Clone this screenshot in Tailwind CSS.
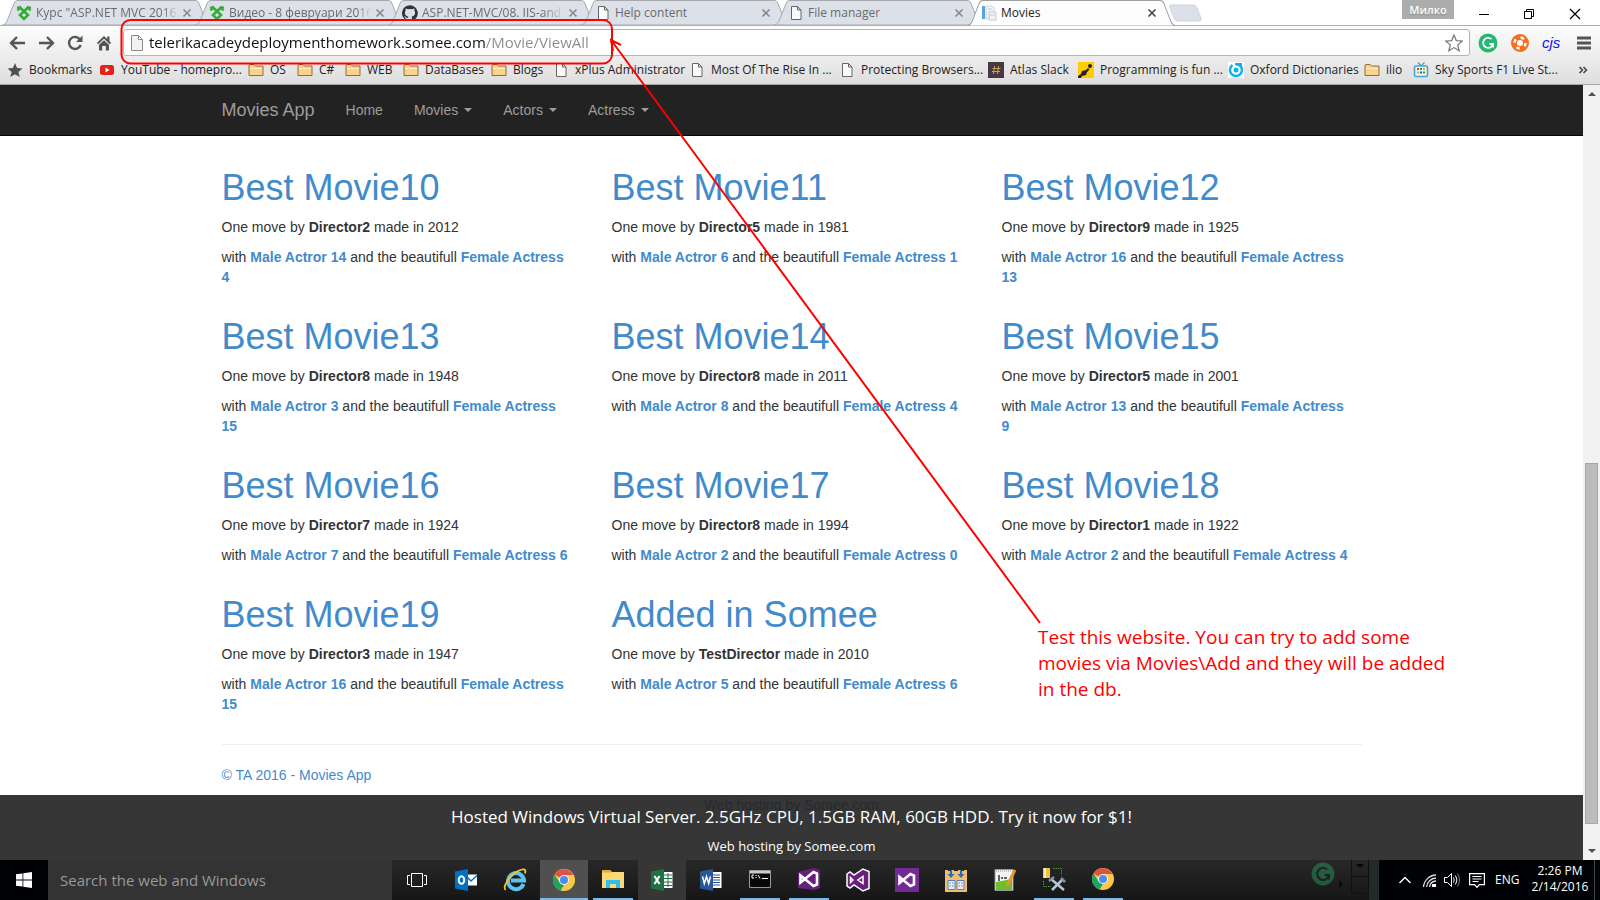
<!DOCTYPE html>
<html lang="en">
<head>
<meta charset="utf-8">
<title>Movies</title>
<script src="https://cdn.jsdelivr.net/npm/@tailwindcss/browser@4"></script>
</head>
<body class="relative flex min-h-screen flex-col bg-white font-['Open_Sans','Noto_Sans',sans-serif]">

<!-- Shared icon shapes -->
<svg class="hidden" aria-hidden="true">
  <symbol id="tab" viewBox="0 0 209 25" preserveAspectRatio="none">
    <path d="M0.500 25 C3 24.500 4 23 5 21 L12 3.500 C13 1 14 .5 16 .5 H193 C195 .5 196 1 197 3.500 L204 21 C205 23 206 24.500 208.500 25Z"/>
  </symbol>
  <symbol id="page" viewBox="0 0 16 16"><path d="M3.500 1.500h6l3.500 3.500v9.500h-9.500z M9.500 1.500v3.500h3.500" fill="#fafafa" stroke="#666"/></symbol>
  <symbol id="folder" viewBox="0 0 16 16"><path d="M1 13.500V4Q1 2.500 2 2.500h4l1.500 1.500H15v9.500z" fill="#fbd48a" stroke="#94683a"/><path d="M2 6h12v1H2z" fill="#ffebc0"/></symbol>
  <symbol id="telerik" viewBox="0 0 16 16"><path d="M1.500 5.500 4 2.500l8 7.500-4 4-4-4 8-7.500 2.500 3" fill="none" stroke="#36ab3c" stroke-width="2.600"/><path d="M1 2.500h3M12 2.500h3" stroke="#36ab3c" stroke-width="2"/></symbol>
  <symbol id="x" viewBox="0 0 10 10"><path d="M1.500 1.500l7 7M8.500 1.500l-7 7" stroke="currentColor" stroke-width="1.600"/></symbol>
  <symbol id="chrome" viewBox="0 0 24 24">
    <circle cx="12" cy="12" r="11" fill="#fbc943"/>
    <path d="M12 12 2.500 6.500A11 11 0 0 1 21.500 7H12z" fill="#de5145"/>
    <path d="M8 15l4 2-3.500 5.600A11 11 0 0 1 2.500 6.500z" fill="#1da362"/>
    <circle cx="12" cy="12" r="5" fill="#f4f4f4"/><circle cx="12" cy="12" r="4" fill="#4c8bf5"/>
  </symbol>
  <symbol id="grammarly" viewBox="0 0 20 20"><circle cx="10" cy="10" r="9.500" fill="#25b773"/><path d="M13.500 6.200A5 5 0 1 0 15 11h-3.500M15 11v3.500" fill="none" stroke="currentColor" stroke-width="1.800"/></symbol>
</svg>

<!-- Tab strip -->
<header class="flex h-[25px] items-stretch bg-white text-[12px] text-[#6b6b6b]">
  <nav class="flex pl-0.5" aria-label="Tabs">
    <a href="#" class="relative flex w-[209px] items-center pr-[19px] pl-3.5">
      <svg class="absolute inset-0 size-full" fill="#dce0e8" stroke="#a7a9ac"><use href="#tab"/></svg>
      <svg class="relative size-4"><use href="#telerik"/></svg>
      <span class="relative ml-1 flex-1 overflow-hidden whitespace-nowrap mask-r-from-90%">Курс "ASP.NET MVC 2016"</span>
      <svg class="relative ml-1 size-2.5 text-[#888]"><use href="#x"/></svg>
    </a>
    <a href="#" class="relative -ml-4 flex w-[209px] items-center pr-[19px] pl-3.5">
      <svg class="absolute inset-0 size-full" fill="#dce0e8" stroke="#a7a9ac"><use href="#tab"/></svg>
      <svg class="relative size-4"><use href="#telerik"/></svg>
      <span class="relative ml-1 flex-1 overflow-hidden whitespace-nowrap mask-r-from-90%">Видео - 8 февруари 2016</span>
      <svg class="relative ml-1 size-2.5 text-[#888]"><use href="#x"/></svg>
    </a>
    <a href="#" class="relative -ml-4 flex w-[209px] items-center pr-[19px] pl-3.5">
      <svg class="absolute inset-0 size-full" fill="#dce0e8" stroke="#a7a9ac"><use href="#tab"/></svg>
      <svg class="relative size-4" viewBox="0 0 16 16"><path fill="#333" d="M8 .2a8 8 0 0 0-2.500 15.600c.4.100.5-.2.500-.4v-1.500c-2.200.5-2.700-1-2.700-1-.4-.9-.9-1.200-.9-1.200-.7-.5.100-.5.100-.5.800.100 1.200.8 1.200.8.700 1.200 1.900.9 2.300.7.100-.5.300-.9.500-1.100-1.800-.2-3.600-.9-3.600-4 0-.9.300-1.600.8-2.100-.1-.2-.4-1 .1-2.100 0 0 .7-.2 2.200.8a7.500 7.500 0 0 1 4 0c1.500-1 2.200-.8 2.200-.8.400 1.100.2 1.900.1 2.100.5.600.8 1.300.8 2.100 0 3.100-1.900 3.800-3.700 4 .3.300.6.800.6 1.500v2.200c0 .2.100.5.600.4A8 8 0 0 0 8 .2z"/></svg>
      <span class="relative ml-1 flex-1 overflow-hidden whitespace-nowrap mask-r-from-85%">ASP.NET-MVC/08. IIS-and-</span>
      <svg class="relative ml-1 size-2.5 text-[#888]"><use href="#x"/></svg>
    </a>
    <a href="#" class="relative -ml-4 flex w-[209px] items-center pr-[19px] pl-3.5">
      <svg class="absolute inset-0 size-full" fill="#dce0e8" stroke="#a7a9ac"><use href="#tab"/></svg>
      <svg class="relative size-4"><use href="#page"/></svg>
      <span class="relative ml-1 flex-1 overflow-hidden whitespace-nowrap">Help content</span>
      <svg class="relative ml-1 size-2.5 text-[#888]"><use href="#x"/></svg>
    </a>
    <a href="#" class="relative -ml-4 flex w-[209px] items-center pr-[19px] pl-3.5">
      <svg class="absolute inset-0 size-full" fill="#dce0e8" stroke="#a7a9ac"><use href="#tab"/></svg>
      <svg class="relative size-4"><use href="#page"/></svg>
      <span class="relative ml-1 flex-1 overflow-hidden whitespace-nowrap">File manager</span>
      <svg class="relative ml-1 size-2.5 text-[#888]"><use href="#x"/></svg>
    </a>
    <a href="#" aria-current="page" class="relative z-10 -ml-4 -mb-px flex w-[209px] items-center pr-[19px] pb-px pl-3.5 text-[#222]">
      <svg class="absolute inset-0 size-full" fill="#fdfdfd" stroke="#a0a0a0"><use href="#tab"/></svg>
      <svg class="relative size-4" viewBox="0 0 16 16"><path d="M1 1h3v13H1z" fill="#5ba3d9"/><path d="M5 1h6l2 2v11H5z" fill="#f1f4f7" stroke="#ccd3da"/><path d="M7 4h4M8 7h7v8H8zM9 10h5" stroke="#c3cad2" fill="#f1f4f7"/></svg>
      <span class="relative ml-1 flex-1 overflow-hidden whitespace-nowrap">Movies</span>
      <svg class="relative ml-1 size-2.5 text-[#444]"><use href="#x"/></svg>
    </a>
    <button aria-label="New tab" class="-ml-2 h-[22px] w-9 pt-1"><svg class="h-full w-full" viewBox="0 0 36 18"><path d="M3 1h22q3 0 4 3l4 10q1 3-2 3H10q-3 0-4-3L2 4q-1-3 1-3z" fill="#dce0e8" stroke="#d0d3d8"/></svg></button>
  </nav>
  <div class="ml-auto flex items-start">
    <button class="mr-5 h-[19px] w-[52px] bg-[#acacac] text-[11px] leading-[18px] font-semibold text-white text-shadow-sm">Милко</button>
    <button aria-label="Minimize" class="h-6 w-5"><svg class="size-5" viewBox="0 0 20 20"><path d="M5 12.500h10" stroke="#000"/></svg></button>
    <button aria-label="Restore" class="ml-[25px] h-6 w-5"><svg class="size-5" viewBox="0 0 20 20" fill="none" stroke="#000"><path d="M5.500 9.500h7v7h-7zM7.500 9.500v-2h7v7h-2"/></svg></button>
    <button aria-label="Close" class="mr-[15px] ml-[26px] h-6 w-5"><svg class="size-5" viewBox="0 0 20 20"><path d="M5 7l10 10M15 7l-10 10" stroke="#000" stroke-width="1.200"/></svg></button>
  </div>
</header>

<!-- Toolbar and bookmarks -->
<div class="h-[60px] border-y border-t-[#b0b0b0] border-b-[#a6a6a6] bg-linear-to-b from-[#fdfdfd] to-[#dedede] text-[#222]">
  <div class="flex h-[33px] items-center">
    <button aria-label="Back" class="ml-2 w-[18px]"><svg class="h-4 w-[18px]" viewBox="0 0 18 16" fill="none" stroke="#555" stroke-width="2.400"><path d="M17 8H3M9 2L3 8l6 6"/></svg></button>
    <button aria-label="Forward" class="ml-3 w-[18px]"><svg class="h-4 w-[18px]" viewBox="0 0 18 16" fill="none" stroke="#555" stroke-width="2.400"><path d="M1 8h14M9 2l6 6-6 6"/></svg></button>
    <button aria-label="Reload" class="ml-[11px] w-4"><svg class="size-4" viewBox="0 0 16 16"><path d="M13 4.500A6 6 0 1 0 13.700 10" fill="none" stroke="#555" stroke-width="2.400"/><path d="M15.500 .5v6.500h-6.500z" fill="#555"/></svg></button>
    <button aria-label="Home" class="ml-[13px] w-4"><svg class="size-4" viewBox="0 0 16 16" fill="#555"><path d="M8 1 .8 8l1.400 1.200L8 3.800l5.800 5.400L15.200 8 13.500 6.300V1.500h-2.300v2.600z"/><path d="M3 9.800 8 5.200l5 4.600V15.500H9.800V11H6.200v4.500H3z"/></svg></button>
    <form class="ml-[11px] flex h-[27px] flex-1 items-center rounded-[3px] border border-[#b4b4b4] bg-white pr-1.5 pl-1.5">
      <svg class="size-4" viewBox="0 0 16 16"><path d="M1.500.500h7l4 4v11h-11z M8.500.500v4h4" fill="#f2f2f2" stroke="#8a8a8a"/></svg>
      <input aria-label="Address" value="telerikacadeydeploymenthomework.somee.com/Movie/ViewAll" class="ml-[3px] min-w-0 flex-1 bg-linear-to-r from-[#111] from-[337px] to-[#8b8b8b] to-[337px] bg-clip-text text-[15px] text-transparent outline-none">
      <button type="button" aria-label="Bookmark this page"><svg class="size-[18px]" viewBox="0 0 18 18"><path d="M9 1l2.300 5.600 6 .4-4.600 3.900 1.500 5.900L9 13.600l-5.200 3.200 1.500-5.900L.7 7l6-.4z" fill="#fff" stroke="#777" stroke-width="1.200"/></svg></button>
    </form>
    <button aria-label="Grammarly" class="ml-2 text-white"><svg class="size-5"><use href="#grammarly"/></svg></button>
    <button aria-label="Extension" class="ml-3"><svg class="size-5" viewBox="0 0 20 20"><circle cx="10" cy="10" r="9" fill="#f36f21"/><circle cx="10" cy="10" r="3" fill="#fff"/><circle cx="10" cy="10" r="5.500" fill="none" stroke="#fff" stroke-width="2.500" stroke-dasharray="3.500 5.140"/></svg></button>
    <button class="ml-3 w-6 text-left font-['Liberation_Sans',sans-serif] text-[15px] leading-5 text-[#1010ee] italic">cjs</button>
    <button aria-label="Menu" class="mr-[9px] ml-[11px]"><svg class="h-4 w-3.5" viewBox="0 0 14 16"><path d="M0 3h14M0 8h14M0 13h14" stroke="#555" stroke-width="3"/></svg></button>
  </div>
  <nav aria-label="Bookmarks" class="flex h-[22px] items-center pr-3 pl-[7px] text-[12px] whitespace-nowrap">
    <a href="#" class="flex w-[92px] shrink-0 items-center gap-1.5"><svg class="size-4" viewBox="0 0 16 16"><path d="M8 1l2.100 5 5.400.4-4.100 3.500L12.700 15 8 12.200 3.300 15l1.300-5.100L.5 6.400 5.900 6z" fill="#4f4f4f"/></svg>Bookmarks</a>
    <a href="#" class="flex w-[149px] shrink-0 items-center gap-1.5"><svg class="size-4" viewBox="0 0 16 16"><rect x="1" y="3" width="14" height="10" rx="2.500" fill="#e62117"/><path d="M6.500 5.500 10.500 8l-4 2.500z" fill="#fff"/></svg>YouTube - homepro...</a>
    <a href="#" class="flex w-[49px] shrink-0 items-center gap-1.5"><svg class="size-4"><use href="#folder"/></svg>OS</a>
    <a href="#" class="flex w-12 shrink-0 items-center gap-1.5"><svg class="size-4"><use href="#folder"/></svg>C#</a>
    <a href="#" class="flex w-[58px] shrink-0 items-center gap-1.5"><svg class="size-4"><use href="#folder"/></svg>WEB</a>
    <a href="#" class="flex w-[88px] shrink-0 items-center gap-1.5"><svg class="size-4"><use href="#folder"/></svg>DataBases</a>
    <a href="#" class="flex w-[62px] shrink-0 items-center gap-1.5"><svg class="size-4"><use href="#folder"/></svg>Blogs</a>
    <a href="#" class="flex w-[136px] shrink-0 items-center gap-1.5"><svg class="size-4"><use href="#page"/></svg>xPlus Administrator</a>
    <a href="#" class="flex w-[150px] shrink-0 items-center gap-1.5"><svg class="size-4"><use href="#page"/></svg>Most Of The Rise In ...</a>
    <a href="#" class="flex w-[149px] shrink-0 items-center gap-1.5"><svg class="size-4"><use href="#page"/></svg>Protecting Browsers...</a>
    <a href="#" class="flex w-[90px] shrink-0 items-center gap-1.5"><svg class="size-4" viewBox="0 0 16 16"><path d="M0 0h16v16H0z" fill="#453744"/><path d="M6.500 4 5.500 12M10.500 4l-1 8M4.500 6.500h8M4 9.500h8" stroke="#c8a24e"/></svg>Atlas Slack</a>
    <a href="#" class="flex w-[150px] shrink-0 items-center gap-1.5"><svg class="size-4" viewBox="0 0 16 16"><path d="M0 0h16v16H0z" fill="#fc0"/><path d="M0 16v-2l3-2 1-3 4-1 2-2 1.500 1.500L9 10l-1 3-4 1-1 2z" fill="#222"/><circle cx="12" cy="4" r="2" fill="#222"/></svg>Programming is fun ...</a>
    <a href="#" class="flex w-[136px] shrink-0 items-center gap-1.5"><svg class="size-4" viewBox="0 0 16 16"><path d="M0 0h16v16H0z" fill="#fff"/><path d="M12 3.500A6 6 0 1 1 4.500 3" fill="none" stroke="#0db1ea" stroke-width="2.500"/><circle cx="8" cy="8" r="2.500" fill="#0db1ea"/><path d="M7 1h7v3.500h-3L7 3z" fill="#0db1ea"/></svg>Oxford Dictionaries</a>
    <a href="#" class="flex w-[49px] shrink-0 items-center gap-1.5"><svg class="size-4"><use href="#folder"/></svg>ilio</a>
    <a href="#" class="flex flex-1 items-center gap-1.5"><svg class="size-4" viewBox="0 0 16 16"><path d="M5 .5 8 4l3.500-3.500" fill="none" stroke="#4aa3cf" stroke-width="1.400"/><rect x="1.500" y="4" width="13" height="10.500" rx="1.500" fill="#e9f6fc" stroke="#4aa3cf" stroke-width="1.600"/><path d="M4 7h2" stroke="#e33" stroke-width="2"/><path d="M7 7h2M10 10.500h2" stroke="#393" stroke-width="2"/><path d="M10 7h2M4 10.500h2" stroke="#e9a400" stroke-width="2"/><path d="M7 10.500h2" stroke="#25c" stroke-width="2"/></svg>Sky Sports F1 Live St...</a>
    <button aria-label="More bookmarks"><svg class="size-2.5" viewBox="0 0 10 10" fill="none" stroke="#444" stroke-width="1.500"><path d="M1.500 2l3 3-3 3M5.500 2l3 3-3 3"/></svg></button>
  </nav>
</div>

<!-- Web page and its scrollbar -->
<div class="flex flex-1 font-['Liberation_Sans',Arial,sans-serif] text-[14px] leading-5 text-[#333]">
  <div class="flex min-w-0 flex-1 flex-col">
    <nav aria-label="Main" class="border-b border-[#080808] bg-[#222] text-[#9d9d9d]">
      <div class="mx-auto flex h-[50px] max-w-[1170px] items-center gap-px">
        <a href="#" class="px-[15px] text-[18px]">Movies App</a>
        <a href="#" class="px-[15px]">Home</a>
        <button class="flex items-center gap-1.5 px-[15px]">Movies <svg class="h-1 w-2" viewBox="0 0 8 4"><path d="M0 0h8L4 4z" fill="currentColor"/></svg></button>
        <button class="flex items-center gap-1.5 px-[15px]">Actors <svg class="h-1 w-2" viewBox="0 0 8 4"><path d="M0 0h8L4 4z" fill="currentColor"/></svg></button>
        <button class="flex items-center gap-1.5 px-[15px]">Actress <svg class="h-1 w-2" viewBox="0 0 8 4"><path d="M0 0h8L4 4z" fill="currentColor"/></svg></button>
      </div>
    </nav>
    <main class="mx-auto w-full max-w-[1170px] pt-3">
      <div class="grid grid-cols-3">
        <article class="pt-5 pr-6 pl-[15px]"><h1 class="mb-2.5 text-[36px] leading-[39px]"><a href="#" class="text-[#428bca]">Best Movie10</a></h1><p class="mb-2.5">One move by <b>Director2</b> made in 2012</p><p class="mb-2.5">with <a href="#" class="font-bold text-[#428bca]">Male Actror 14</a> and the beautifull <a href="#" class="font-bold text-[#428bca]">Female Actress 4</a></p></article>
        <article class="pt-5 pr-6 pl-[15px]"><h1 class="mb-2.5 text-[36px] leading-[39px]"><a href="#" class="text-[#428bca]">Best Movie11</a></h1><p class="mb-2.5">One move by <b>Director5</b> made in 1981</p><p class="mb-2.5">with <a href="#" class="font-bold text-[#428bca]">Male Actror 6</a> and the beautifull <a href="#" class="font-bold text-[#428bca]">Female Actress 1</a></p></article>
        <article class="pt-5 pr-6 pl-[15px]"><h1 class="mb-2.5 text-[36px] leading-[39px]"><a href="#" class="text-[#428bca]">Best Movie12</a></h1><p class="mb-2.5">One move by <b>Director9</b> made in 1925</p><p class="mb-2.5">with <a href="#" class="font-bold text-[#428bca]">Male Actror 16</a> and the beautifull <a href="#" class="font-bold text-[#428bca]">Female Actress 13</a></p></article>
        <article class="pt-5 pr-6 pl-[15px]"><h1 class="mb-2.5 text-[36px] leading-[39px]"><a href="#" class="text-[#428bca]">Best Movie13</a></h1><p class="mb-2.5">One move by <b>Director8</b> made in 1948</p><p class="mb-2.5">with <a href="#" class="font-bold text-[#428bca]">Male Actror 3</a> and the beautifull <a href="#" class="font-bold text-[#428bca]">Female Actress 15</a></p></article>
        <article class="pt-5 pr-6 pl-[15px]"><h1 class="mb-2.5 text-[36px] leading-[39px]"><a href="#" class="text-[#428bca]">Best Movie14</a></h1><p class="mb-2.5">One move by <b>Director8</b> made in 2011</p><p class="mb-2.5">with <a href="#" class="font-bold text-[#428bca]">Male Actror 8</a> and the beautifull <a href="#" class="font-bold text-[#428bca]">Female Actress 4</a></p></article>
        <article class="pt-5 pr-6 pl-[15px]"><h1 class="mb-2.5 text-[36px] leading-[39px]"><a href="#" class="text-[#428bca]">Best Movie15</a></h1><p class="mb-2.5">One move by <b>Director5</b> made in 2001</p><p class="mb-2.5">with <a href="#" class="font-bold text-[#428bca]">Male Actror 13</a> and the beautifull <a href="#" class="font-bold text-[#428bca]">Female Actress 9</a></p></article>
        <article class="pt-5 pr-6 pl-[15px]"><h1 class="mb-2.5 text-[36px] leading-[39px]"><a href="#" class="text-[#428bca]">Best Movie16</a></h1><p class="mb-2.5">One move by <b>Director7</b> made in 1924</p><p class="mb-2.5">with <a href="#" class="font-bold text-[#428bca]">Male Actror 7</a> and the beautifull <a href="#" class="font-bold text-[#428bca]">Female Actress 6</a></p></article>
        <article class="pt-5 pr-6 pl-[15px]"><h1 class="mb-2.5 text-[36px] leading-[39px]"><a href="#" class="text-[#428bca]">Best Movie17</a></h1><p class="mb-2.5">One move by <b>Director8</b> made in 1994</p><p class="mb-2.5">with <a href="#" class="font-bold text-[#428bca]">Male Actror 2</a> and the beautifull <a href="#" class="font-bold text-[#428bca]">Female Actress 0</a></p></article>
        <article class="pt-5 pr-6 pl-[15px]"><h1 class="mb-2.5 text-[36px] leading-[39px]"><a href="#" class="text-[#428bca]">Best Movie18</a></h1><p class="mb-2.5">One move by <b>Director1</b> made in 1922</p><p class="mb-2.5">with <a href="#" class="font-bold text-[#428bca]">Male Actror 2</a> and the beautifull <a href="#" class="font-bold text-[#428bca]">Female Actress 4</a></p></article>
        <article class="pt-5 pr-6 pl-[15px]"><h1 class="mb-2.5 text-[36px] leading-[39px]"><a href="#" class="text-[#428bca]">Best Movie19</a></h1><p class="mb-2.5">One move by <b>Director3</b> made in 1947</p><p class="mb-2.5">with <a href="#" class="font-bold text-[#428bca]">Male Actror 16</a> and the beautifull <a href="#" class="font-bold text-[#428bca]">Female Actress 15</a></p></article>
        <article class="pt-5 pr-6 pl-[15px]"><h1 class="mb-2.5 text-[36px] leading-[39px]"><a href="#" class="text-[#428bca]">Added in Somee</a></h1><p class="mb-2.5">One move by <b>TestDirector</b> made in 2010</p><p class="mb-2.5">with <a href="#" class="font-bold text-[#428bca]">Male Actror 5</a> and the beautifull <a href="#" class="font-bold text-[#428bca]">Female Actress 6</a></p></article>
      </div>
      <footer class="px-[15px] pb-2.5">
        <hr class="my-5 border-[#eee]">
        <p><a href="#" class="text-[#428bca]">© TA 2016 - Movies App</a></p>
      </footer>
    </main>
    <aside class="relative mt-auto flex h-[65px] flex-col items-center bg-[#363636] pt-2.5 font-['Open_Sans','Noto_Sans',sans-serif] text-white">
      <span class="absolute inset-x-0 top-0 text-center font-['Liberation_Sans',sans-serif] text-[14px] text-[#262a30]">Web hosting by Somee.com</span>
      <a href="#" class="relative text-[17px] leading-6">Hosted Windows Virtual Server. 2.5GHz CPU, 1.5GB RAM, 60GB HDD. Try it now for $1!</a>
      <a href="#" class="relative mt-[7px] text-[13px] leading-5">Web hosting by Somee.com</a>
    </aside>
  </div>
  <div class="flex w-[17px] flex-col items-center bg-[#f1f1f1]" aria-hidden="true">
    <svg class="h-[17px] w-2 shrink-0" viewBox="0 0 8 17"><path d="M0 11h8L4 7z" fill="#505050"/></svg>
    <div class="grow-[362]"></div>
    <div class="w-[13px] grow-[360] border border-[#a8a8a8] bg-[#bcbcbc]"></div>
    <div class="grow-[19]"></div>
    <svg class="h-[17px] w-2 shrink-0" viewBox="0 0 8 17"><path d="M0 6h8l-4 4z" fill="#505050"/></svg>
  </div>
</div>

<!-- Taskbar -->
<footer class="flex h-10 items-stretch bg-[#242424] text-white">
  <button aria-label="Start" class="flex w-12 items-center justify-center bg-[#000206]"><svg class="size-4" viewBox="0 0 16 16" fill="#fff"><path d="M0 2.300 6.500 1.400v6.100H0zM7.300 1.300 16 0v7.500H7.300zM0 8.400h6.500v6.200L0 13.700zM7.300 8.400H16V16l-8.700-1.300z"/></svg></button>
  <input aria-label="Search the web and Windows" placeholder="Search the web and Windows" class="w-[344px] bg-[#333] px-3 text-[15px] outline-none placeholder:text-[#999]">
  <div class="flex flex-1 gap-px bg-linear-to-b from-[#282828] to-[#161616] pl-px">
    <button aria-label="Task view" class="flex w-12 items-center justify-center"><svg class="h-4 w-5" viewBox="0 0 20 16" fill="none" stroke="#fff"><path d="M4.500 1.500h11v13h-11zM3 3.500H.5v9H3M17 3.500h2.500v9H17"/></svg></button>
    <button aria-label="Outlook" class="flex w-12 items-center justify-center"><svg class="size-6" viewBox="0 0 24 24"><path d="M11 6.500h12v11H11z" fill="#fff"/><path d="M12 8l5 5 6-5.500" fill="none" stroke="#0072c6" stroke-width="1.500"/><path d="M1 3.500 14 1v22L1 20.500z" fill="#0072c6"/><ellipse cx="7.500" cy="12" rx="2.800" ry="3.800" fill="none" stroke="#fff" stroke-width="2"/></svg></button>
    <button aria-label="Internet Explorer" class="flex w-12 items-center justify-center"><svg class="size-6" viewBox="0 0 24 24" fill="none"><path d="M20.500 16A8 8 0 1 1 21 12.500H8" stroke="#5cc3f2" stroke-width="4"/><path d="M2.500 22C-1 18 9 4 19 1.500c3-.7 4 1 3 4" stroke="#f6c42c" stroke-width="1.800"/></svg></button>
    <button aria-label="Chrome" class="flex w-12 items-center justify-center border-b-2 border-[#76b9ed] bg-[#505050] pt-0.5"><svg class="size-6"><use href="#chrome"/></svg></button>
    <button aria-label="File Explorer" class="flex w-12 flex-col items-center justify-end"><svg class="mb-[7px] size-6" viewBox="0 0 24 24"><path d="M1 3h8l2 2h12v16H1z" fill="#f9d978"/><path d="M1 3h8l1.500 2.500H1z" fill="#e8ab2e"/><path d="M5 21v-8h14v8h-4v-4H9v4z" fill="#2dbdee"/></svg><i class="h-0.5 w-10 bg-[#76b9ed]"></i></button>
    <button aria-label="Excel" class="flex w-12 items-center justify-center bg-[#363636]"><svg class="size-6" viewBox="0 0 24 24"><path d="M12 4h10.500v16H12z" fill="#fff"/><path d="M13 7h9M13 10.500h9M13 14h9M13 17.500h9M18 5v14" stroke="#207245"/><path d="M1 3.500 14 1v22L1 20.500z" fill="#207245"/><path d="M4.500 8l5 8M9.500 8l-5 8" stroke="#fff" stroke-width="2"/></svg></button>
    <button aria-label="Word" class="flex w-12 items-center justify-center"><svg class="size-6" viewBox="0 0 24 24"><path d="M12 4h10.500v16H12z" fill="#fff"/><path d="M13 7h8M13 9.500h8M13 12h8M13 14.500h8M13 17h8" stroke="#2b579a"/><path d="M1 3.500 14 1v22L1 20.500z" fill="#2b579a"/><path d="M3.500 8.500l1.800 7 2.200-7 2.200 7 1.800-7" fill="none" stroke="#fff" stroke-width="1.500"/></svg></button>
    <button aria-label="Command Prompt" class="flex w-12 flex-col items-center justify-end"><svg class="mb-[7px] size-6" viewBox="0 0 24 24"><path d="M1.500 3.500h21v17h-21z" fill="#080808" stroke="#999"/><path d="M2 4h20v2.500H2z" fill="#ccc"/><path d="M6 8H4v3h2M8 8v1M8 10v1M10 8l2 3.500M14 11.500h6" fill="none" stroke="#fff"/></svg><i class="h-0.5 w-10 bg-[#76b9ed]"></i></button>
    <button aria-label="Visual Studio" class="flex w-12 flex-col items-center justify-end"><svg class="mb-[7px] size-6" viewBox="0 0 24 24"><path d="M1 5 17 1l6 2v18l-6 2L1 21z" fill="#68217a"/><path d="M3.500 8.500v7L16.500 5l3.500 1.500v11L16.500 19z" fill="none" stroke="#fff" stroke-width="2.600"/></svg><i class="h-0.5 w-10 bg-[#76b9ed]"></i></button>
    <button aria-label="Visual Studio 2015" class="flex w-12 items-center justify-center"><svg class="size-6" viewBox="0 0 24 24"><path d="M1 6l3-2 4 3 9-6 6 2.500v17L17 23l-9-6-4 3-3-2z" fill="#68217a" stroke="#fff" stroke-width="1.500"/><path d="M4.500 9.500v5L7 12zM17 8.500v7L12 12z" fill="#68217a" stroke="#fff" stroke-width="1.500"/></svg></button>
    <button aria-label="Visual Studio Express" class="flex w-12 items-center justify-center"><svg class="size-6" viewBox="0 0 24 24"><path d="M0 0h24v24H0z" fill="#742a94"/><path d="M4.500 9v6L15.500 6l3.500 1.500v9L15.500 18z" fill="none" stroke="#fff" stroke-width="2.600"/></svg></button>
    <button aria-label="Configuration tool" class="flex w-12 items-center justify-center"><svg class="size-6" viewBox="0 0 24 24"><path d="M1 2h3v1h3V2h3v1h4V2h3v1h3V2h3v22H1z" fill="#f1bd6e"/><path d="M7 2v6M17 2v6" stroke="#2d6bb5" stroke-width="2"/><path d="M3.500 6h7L7 10zM13.500 6h7L17 10z" fill="#2d6bb5"/><path d="M4 12.500h7v9H4zM13 12.500h7v9h-7z" fill="#e8eef8" stroke="#5a7fb5"/><path d="M5.500 15h4M5.500 18h4M14.500 15h4M14.500 18h4" stroke="#5a7fb5" stroke-dasharray="1.500 1"/></svg></button>
    <button aria-label="Text editor" class="flex w-12 items-center justify-center"><svg class="size-6" viewBox="0 0 24 24"><path d="M2 1.500h18v21H2z" fill="#f4f4f4" stroke="#999"/><path d="M3 14l16-3v11H3z" fill="#6abf2b"/><path d="M3 3h15" stroke="#888" stroke-dasharray="1 1"/><path d="M6 7v6M8 10h2M11 10h3" stroke="#333" stroke-width="1.500"/><path d="M22 2 14 18" stroke="#e39a29" stroke-width="3"/></svg></button>
    <button aria-label="Database tools" class="flex w-12 flex-col items-center justify-end"><svg class="mb-[7px] size-6" viewBox="0 0 24 24" fill="none"><path d="M1 1h7v10H1z" fill="#f0c23f"/><path d="M3 1v10" stroke="#fff1ac" stroke-width="2"/><path d="M11 1.500h8.500v7M1.500 14v5.500H9" stroke="#49a03c" stroke-dasharray="1.500 1"/><path d="M9 12l13 11M21 12 10 23" stroke="#b8c6d5" stroke-width="2.500"/><path d="M7 14l5-4M19 11l4 4" stroke="#8195aa" stroke-width="2.500"/></svg><i class="h-0.5 w-10 bg-[#76b9ed]"></i></button>
    <button aria-label="Chrome apps" class="flex w-12 flex-col items-center justify-end"><svg class="mb-[7px] size-6"><use href="#chrome"/></svg><i class="h-0.5 w-10 bg-[#76b9ed]"></i></button>
    <div class="ml-auto flex items-start text-[#242424]" aria-hidden="true">
      <svg class="mt-0.5 size-6 opacity-40"><use href="#grammarly"/></svg>
      <svg class="mt-5 mr-2 ml-1 h-2 w-1" viewBox="0 0 4 8"><path d="M0 0l4 4-4 4z" fill="#080808"/></svg>
      <svg class="h-9 w-[18px]" viewBox="0 0 18 36" fill="none" stroke="#111"><path d="M.5 0v33h17V0M.5 16.500h17M9 31l7-7M13 31l3-3"/><path d="M5 4h8L9 8z" fill="#080808" stroke="none"/></svg>
      <div class="h-full w-2.5 bg-[#222a2a]"></div>
    </div>
  </div>
  <div class="flex w-[221px] items-center bg-[#000206] pl-[18px]">
    <button aria-label="Show hidden icons" class="w-4"><svg class="size-4" viewBox="0 0 16 16"><path d="M2.500 11 8 5.500l5.500 5.500" fill="none" stroke="#fff" stroke-width="1.400"/></svg></button>
    <button aria-label="Wi-Fi" class="ml-[9px] w-4"><svg class="size-4" viewBox="0 0 16 16" fill="none" stroke="#ddd" stroke-width="1.300"><path d="M1.500 15A13 13 0 0 1 14 3M4.500 15A10 10 0 0 1 14 6M7.500 15A7 7 0 0 1 14 9"/><path d="M10 12h4v3h-4z" fill="#fff" stroke="none"/></svg></button>
    <button aria-label="Volume" class="ml-1.5 w-4"><svg class="size-4" viewBox="0 0 16 16" fill="none" stroke="#fff"><path d="M.5 5.500h3l4-4v13l-4-4h-3zM9.500 5.500q1.500 2.500 0 5M11.500 3.500q3 4.500 0 9"/><path d="M13.500 1.500q4 6.500 0 13" stroke="#777"/></svg></button>
    <button aria-label="Notifications" class="ml-[9px] w-4"><svg class="size-4" viewBox="0 0 16 16" fill="none" stroke="#fff" stroke-width="1.200"><path d="M.6 1.600h14.800v11h-5L8 15.400l-2.400-2.800h-5zM3.500 4.500h9M3.500 7h9M3.500 9.500h6"/></svg></button>
    <button class="ml-2.5 text-[12px]">ENG</button>
    <time class="mr-0.5 ml-auto w-16 pb-0.5 text-center text-[12px] leading-4 whitespace-nowrap">2:26 PM<br>2/14/2016</time>
    <div class="h-full w-1.5 border-l border-[#444]"></div>
  </div>
</footer>

<!-- Red annotation drawn over the window -->
<svg class="pointer-events-none absolute top-0 left-0 z-20 h-[640px] w-[1100px]" fill="none" stroke="#fe0000" stroke-width="2">
  <rect x="121.500" y="20" width="490.500" height="43.500" rx="9"/>
  <path d="M1040 623 611 40M613 51l-2-11 10 5"/>
</svg>
<p class="absolute top-[624px] left-[1038px] z-20 w-[420px] text-[19px] leading-[26px] text-[#fe0000]">Test this website. You can try to add some<br>movies via Movies\Add and they will be added<br>in the db.</p>
</body>
</html>
